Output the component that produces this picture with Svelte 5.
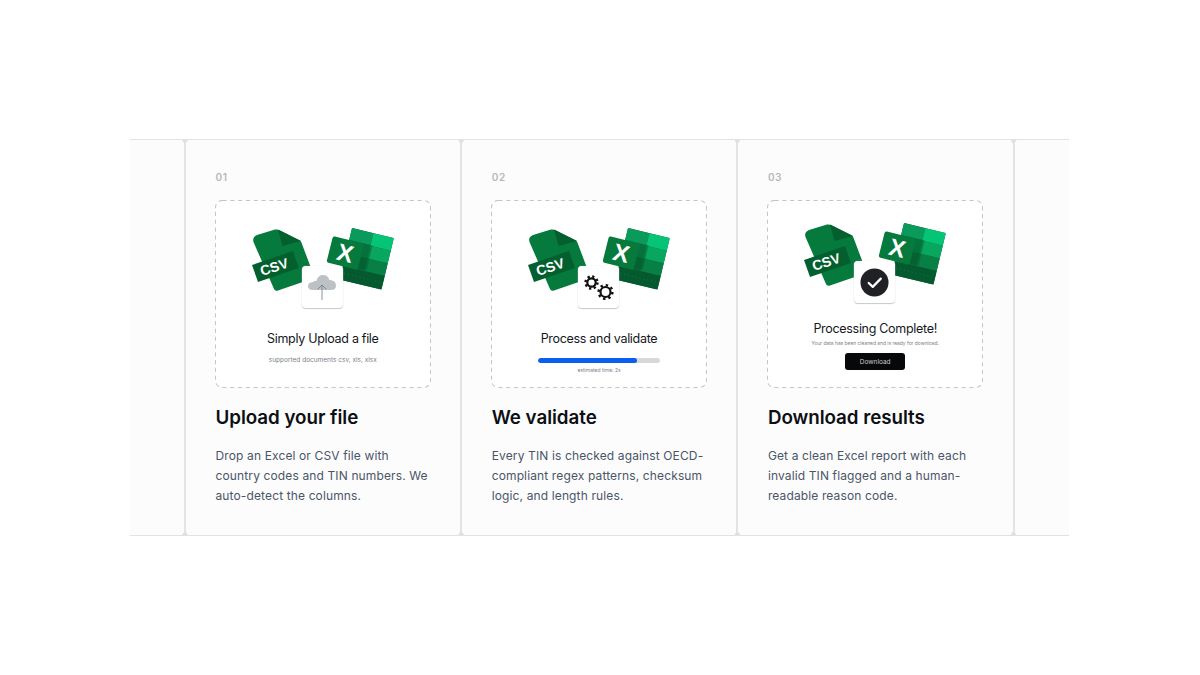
<script>
  const steps = [
    {
      num: '01',
      title: 'Upload your file',
      text: 'Drop an Excel or CSV file with country codes and TIN numbers. We auto-detect the columns.',
      kind: 'upload'
    },
    {
      num: '02',
      title: 'We validate',
      text: 'Every TIN is checked against OECD-compliant regex patterns, checksum logic, and length rules.',
      kind: 'process'
    },
    {
      num: '03',
      title: 'Download results',
      text: 'Get a clean Excel report with each invalid TIN flagged and a human-readable reason code.',
      kind: 'done'
    }
  ];

  const progress = 81;
  const sheetCells = [
    { x: 0, y: 0, w: 22, h: 13, c: '#0a9a5b' },
    { x: 22, y: 0, w: 21, h: 13, c: '#06c475' },
    { x: 0, y: 13, w: 22, h: 13, c: '#078a4e' },
    { x: 22, y: 13, w: 21, h: 13, c: '#09a660' },
    { x: 0, y: 26, w: 22, h: 13, c: '#066c39' },
    { x: 22, y: 26, w: 21, h: 13, c: '#077f45' },
    { x: 0, y: 39, w: 43, h: 14, c: '#05592f' }
  ];
</script>

{#snippet files()}
  <svg class="files" viewBox="0 0 150 75" width="150" height="75" aria-hidden="true">
    <!-- csv document -->
    <path d="M9 14 L27 8.6 Q29 8 31 9 L52 19.5 Q53 20 53.6 22 L66 55 Q67 57 65 57.6 L30 69.5 Q27 70.5 26 68 L5.5 21 Q4 16 9 14 Z" fill="#067a3c" />
    <path d="M30 8.6 L53 20 L34.5 25 Z" fill="#045f2e" />
    <path d="M4 44 L45 30 L51 47 L10 61 Z" fill="#045f2e" />
    <text class="csv" transform="translate(14 55) rotate(-18)">CSV</text>
    <!-- excel sheet -->
    <g transform="translate(104 7) rotate(13.5)">
      <rect width="43" height="53" rx="1.5" fill="#066c39" />
      {#each sheetCells as cell}
        <rect x={cell.x} y={cell.y} width={cell.w} height={cell.h} fill={cell.c} />
      {/each}
      <path d="M3 46 H40" stroke="#0d8a4e" stroke-width="0.7" stroke-dasharray="0.8 3.2" />
      <rect x="0" y="12" width="24" height="26" fill="#04552b" opacity="0.45" />
    </g>
    <g transform="translate(85 15) rotate(14)">
      <rect width="32" height="27" rx="2" fill="#067a3c" />
      <text class="x" x="16" y="22" text-anchor="middle">X</text>
    </g>
  </svg>
{/snippet}

<div class="page">
  <section class="strip">
    <div class="edge"></div>
    {#each steps as step}
      <article class="step rule">
        <span class="num">{step.num}</span>
        <div class="frame" class:shift={step.kind === 'done'}>
          <svg class="dashes" viewBox="0 0 216 188" width="216" height="188" aria-hidden="true">
            <rect x="0.5" y="0.5" width="215" height="187" rx="7" fill="#fff" stroke="#c6c6c6" stroke-width="1.1" stroke-dasharray="4.2 3.6" />
          </svg>
          <div class="art">
            {@render files()}
            <div class="tile">
              {#if step.kind === 'upload'}
                <svg viewBox="0 0 28 26" width="28" height="26" aria-hidden="true">
                  <path d="M5 16 Q0 16 0 12.2 Q0 8.4 5 8 Q6.5 6.8 8.5 6.8 Q10 1 15 1 Q20 1 21.4 6 Q28 6.4 28 11.5 Q28 16 23 16 Z" fill="#bcc1c6" />
                  <path d="M14 26 V11 M9.5 15.5 L14 11 L18.5 15.5" fill="none" stroke="#6f7a88" stroke-width="0.8" />
                </svg>
              {:else if step.kind === 'process'}
                <svg viewBox="0 0 32 32" width="32" height="32" aria-hidden="true">
                  <circle cx="8.5" cy="11.5" r="4.2" fill="none" stroke="#111" stroke-width="2.2" />
                  <circle cx="8.5" cy="11.5" r="6" fill="none" stroke="#111" stroke-width="2.4" stroke-dasharray="2.2 2.51" />
                  <circle cx="22.5" cy="21" r="5" fill="none" stroke="#111" stroke-width="2.2" />
                  <circle cx="22.5" cy="21" r="6.9" fill="none" stroke="#111" stroke-width="2.4" stroke-dasharray="2.4 3.02" />
                </svg>
              {:else}
                <svg viewBox="0 0 30 30" width="29" height="29" aria-hidden="true">
                  <circle cx="15" cy="15" r="14.5" fill="#1f2125" />
                  <path d="M9 15.5 L13.2 19.5 L21.5 11" fill="none" stroke="#fff" stroke-width="2.3" stroke-linecap="round" stroke-linejoin="round" />
                </svg>
              {/if}
            </div>
          </div>

          {#if step.kind === 'upload'}
            <h4 class="upload-title">Simply Upload a file</h4>
            <p class="hint">supported documents csv, xls, xlsx</p>
          {:else if step.kind === 'process'}
            <h4 class="process-title">Process and validate</h4>
            <div class="bar"><div class="fill" style="width: {progress}%"></div></div>
            <p class="eta">estimated time: 2s</p>
          {:else}
            <h4 class="done-title">Processing Complete!</h4>
            <p class="eta done-hint">Your data has been cleaned and is ready for download.</p>
            <button class="download">Download</button>
          {/if}
        </div>
        <h3>{step.title}</h3>
        <p class="body">{step.text}</p>
      </article>
    {/each}
    <div class="edge rule"></div>
  </section>
</div>

<style>
  :global(body) {
    background: #fff;
  }

  .page {
    height: 675px;
    padding: 139px 131px 0 130px;
    box-sizing: border-box;
    font-family: Inter, "Liberation Sans", sans-serif;
  }

  .strip {
    display: grid;
    grid-template-columns: 55px 276.2px 276.2px 276.2px 1fr;
    height: 397px;
    box-sizing: border-box;
    border-top: 1px solid #e2e2e2;
    border-bottom: 1px solid #e2e2e2;
    background: #fcfcfc;
  }

  .rule {
    position: relative;
    margin-left: -1px;
    border-left: 2px solid #e4e4e4;
  }

  /* small flares where the column lines meet the top and bottom lines */
  .rule::before,
  .rule::after {
    content: '';
    position: absolute;
    left: -4px;
    width: 6px;
    height: 3px;
    background: #e0e0e0;
  }

  .rule::before {
    top: 0;
    clip-path: polygon(0 0, 100% 0, 66% 100%, 33% 100%);
  }

  .rule::after {
    bottom: 0;
    clip-path: polygon(33% 0, 66% 0, 100% 100%, 0 100%);
  }

  .step {
    padding: 30px 30px 0 29.5px;
  }

  .num {
    display: block;
    font-size: 10px;
    line-height: 14px;
    font-weight: 600;
    letter-spacing: 0.6px;
    color: #b4b8bd;
  }

  .frame {
    position: relative;
    display: flex;
    flex-direction: column;
    align-items: center;
    height: 188px;
    width: 216px;
    margin: 16px 0 0 -0.7px;
    padding-top: 21px;
    box-sizing: border-box;
  }

  .dashes {
    position: absolute;
    left: 0;
    top: 0;
  }

  .art {
    position: relative;
    width: 150px;
    height: 90px;
  }

  .shift .art {
    margin-top: -5px;
  }

  .files {
    display: block;
  }

  .csv {
    font-family: "Liberation Sans", sans-serif;
    font-size: 14px;
    font-weight: 700;
    fill: #fff;
  }

  .x {
    font-family: "Liberation Sans", sans-serif;
    font-size: 24px;
    font-weight: 700;
    fill: #fff;
  }

  .tile {
    position: absolute;
    left: 54px;
    top: 45px;
    width: 41px;
    height: 42px;
    display: flex;
    align-items: center;
    justify-content: center;
    background: #fff;
    border-radius: 4px;
    box-shadow: 0 1px 1px #c6c9cc, 0 0 1px #d8d8d8;
  }

  h4 {
    position: relative;
    margin: 0;
    font-size: 12.5px;
    line-height: 16px;
    font-weight: 400;
    letter-spacing: -0.3px;
    color: #14171c;
    white-space: nowrap;
  }

  .upload-title,
  .process-title {
    margin-top: 20px;
  }

  .done-title {
    margin-top: 15px;
  }

  .hint {
    position: relative;
    margin: 8px 0 0;
    font-size: 6.5px;
    line-height: 10px;
    color: #7b8088;
  }

  .eta {
    position: relative;
    margin: 3px 0 0;
    font-size: 5px;
    line-height: 8px;
    color: #7b8088;
    white-space: nowrap;
  }

  .done-hint {
    margin-top: 2px;
    font-size: 4.9px;
  }

  .bar {
    position: relative;
    width: 122px;
    height: 5px;
    margin-top: 11px;
    border-radius: 3px;
    background: #d6d8da;
    overflow: hidden;
  }

  .fill {
    height: 100%;
    border-radius: 3px;
    background: #0b5fef;
  }

  .download {
    position: relative;
    width: 60px;
    height: 17px;
    margin-top: 6px;
    padding: 0;
    border: none;
    border-radius: 3px;
    background: #07080a;
    color: #c8ccd0;
    font-family: inherit;
    font-size: 6.5px;
  }

  h3 {
    margin: 18px 0 0;
    font-size: 18.8px;
    line-height: 24px;
    font-weight: 600;
    letter-spacing: -0.05px;
    color: #0c0f14;
  }

  .body {
    margin: 16px 0 0;
    font-size: 12px;
    line-height: 20px;
    color: #4a5568;
    letter-spacing: 0.13px;
  }
</style>
